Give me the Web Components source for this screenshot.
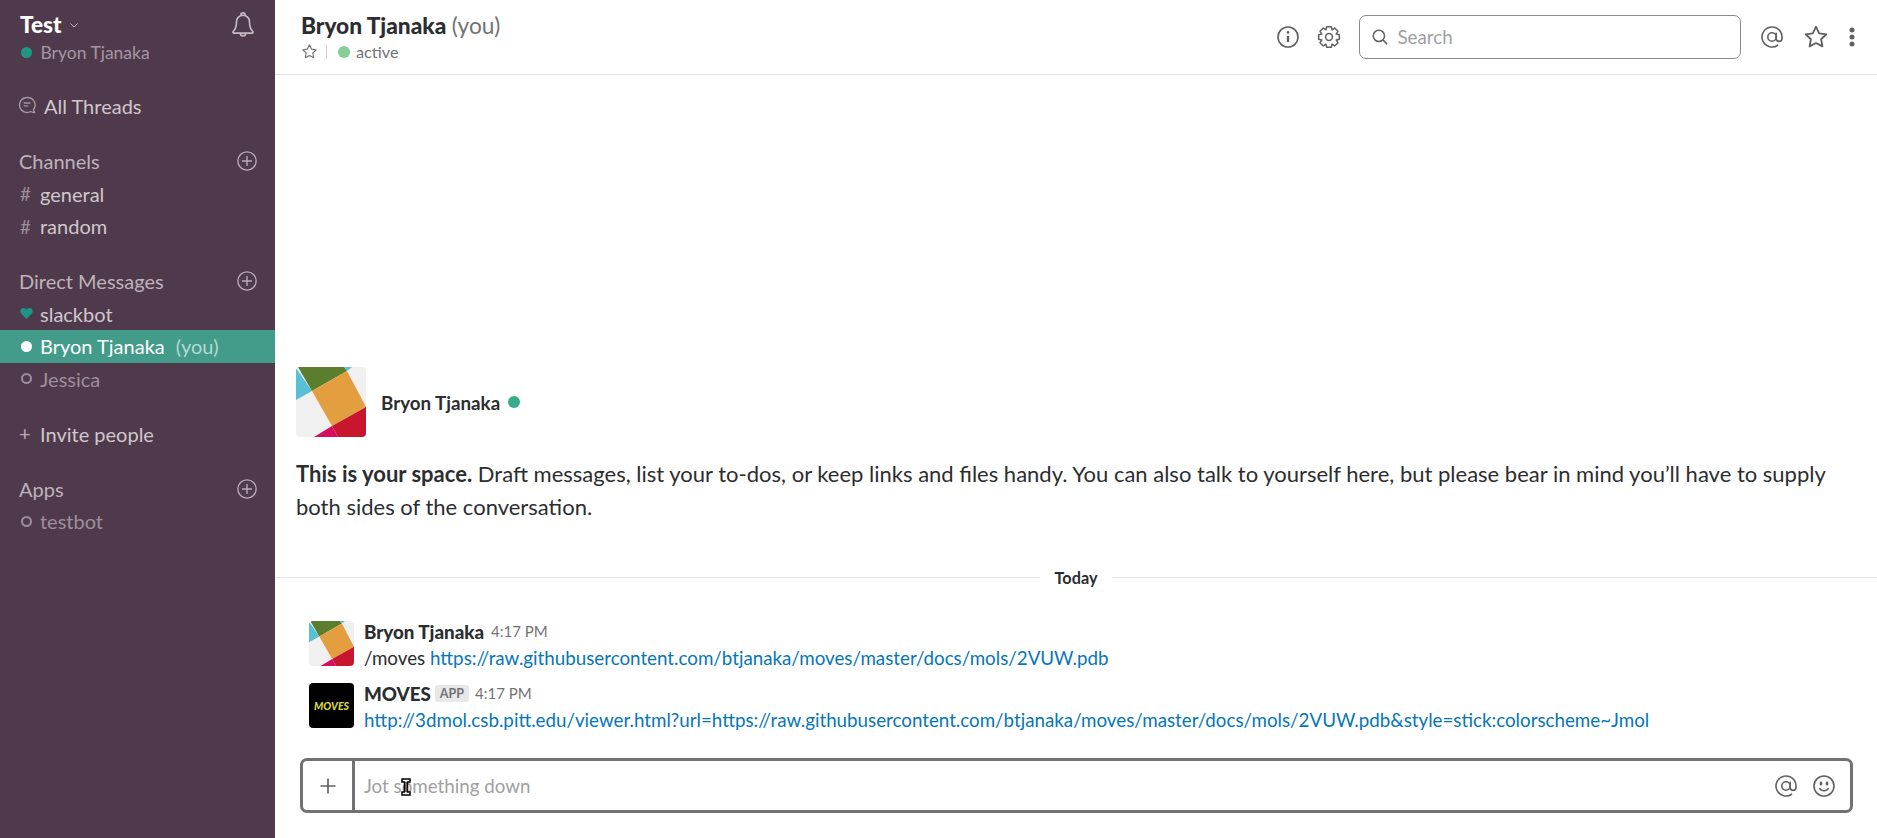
<!DOCTYPE html>
<html>
<head>
<meta charset="utf-8">
<title>Slack</title>
<style>
  html, body { margin: 0; height: 100%; overflow: hidden; }
  body { font-family: Lato, "Open Sans", sans-serif; color: #2c2d30; background: #fff; }
</style>
</head>
<body>
<slack-app>
  <side-bar slot="side"></side-bar>
  <chat-header slot="head"></chat-header>
  <chat-intro slot="main"></chat-intro>
  <day-divider slot="main">Today</day-divider>
  <chat-message slot="main" name="Bryon Tjanaka" time="4:17 PM" avatar="logo">/moves <a href="#">https://raw.githubusercontent.com/btjanaka/moves/master/docs/mols/2VUW.pdb</a></chat-message>
  <chat-message slot="main" name="MOVES" time="4:17 PM" avatar="moves" app><a href="#">http://3dmol.csb.pitt.edu/viewer.html?url=https://raw.githubusercontent.com/btjanaka/moves/master/docs/mols/2VUW.pdb&amp;style=stick:colorscheme~Jmol</a></chat-message>
  <msg-input slot="foot"></msg-input>
</slack-app>

<script>
// eight lobed gear outline, round joins do the rest
function gearPath() {
  const pts = [];
  for (let i = 0; i < 8; i++) {
    const a = i * Math.PI / 4;
    [[-0.40, 7.8], [-0.22, 10.6], [0.22, 10.6], [0.40, 7.8]].forEach(([d, r]) => {
      pts.push((12 + r * Math.cos(a + d)).toFixed(2) + ' ' + (12 + r * Math.sin(a + d)).toFixed(2));
    });
  }
  return 'M' + pts.join('L') + 'z';
}

const ICONS = {
  star: '<path d="M12 2.500l2.900 6.100 6.600.9-4.800 4.600 1.200 6.600-5.900-3.200-5.900 3.200 1.200-6.600L2.500 9.500l6.600-.9z"/>',
  bell: '<path d="M6 9a6 6 0 0 1 12 0c0 6 1.500 7.500 3 9 .6.800.2 1.500-.7 1.500H3.700c-.9 0-1.300-.7-.7-1.500 1.500-1.500 3-3 3-9z"/><path d="M10 2.800a2 2 0 0 1 4 0"/><path d="M9.500 19.500a2.500 2.500 0 0 0 5 0"/>',
  thread: '<path d="M12 3a9 9 0 1 0 4.500 16.800c1.300 1 3 1.300 4.700 1.200-.8-.8-1.400-2-1.500-3.400A9 9 0 0 0 12 3z"/><path d="M8 9.500h8M8 13h5.500"/>',
  plusc: '<circle cx="12" cy="12" r="10"/><path d="M12 6.500v11M6.500 12h11"/>',
  plus: '<path d="M12 3v18M3 12h18"/>',
  info: '<circle cx="12" cy="12" r="10"/><path d="M12 11v6" stroke-width="2.400"/><path d="M12 7.200v.3" stroke-width="2.600" stroke-linecap="round"/>',
  gear: '<path d="' + gearPath() + '"/><circle cx="12" cy="12" r="3.400"/>',
  search: '<circle cx="10.500" cy="10.500" r="7.500"/><path d="M16 16l5.500 5.500"/>',
  at: '<circle cx="12" cy="12" r="4.200"/><path d="M16.200 7.800v5.700a2.900 2.900 0 0 0 5.800 0V12a10 10 0 1 0-4 8"/>',
  smile: '<circle cx="12" cy="12" r="10"/><path d="M7.500 14a5 5 0 0 0 9 0"/><path d="M9 8.800v1.400M15 8.800v1.400" stroke-width="2.600" stroke-linecap="round"/>',
  caret: '<path d="M5 9l7 7 7-7"/>'
};

class UiIcon extends HTMLElement {
  connectedCallback() {
    const size = this.getAttribute('size') || 24;
    const weight = this.getAttribute('weight') || 2;
    this.attachShadow({ mode: 'open' }).innerHTML = `
      <style>
        :host { display: inline-flex; width: ${size}px; height: ${size}px; color: inherit; flex: none; }
        svg { width: 100%; height: 100%; fill: none; stroke: currentColor; stroke-width: ${weight}; stroke-linejoin: round; }
      </style>
      <svg viewBox="0 0 24 24">${ICONS[this.getAttribute('name')]}</svg>`;
  }
}
customElements.define('ui-icon', UiIcon);

class LogoMark extends HTMLElement {
  connectedCallback() {
    const size = this.getAttribute('size') || 70;
    this.attachShadow({ mode: 'open' }).innerHTML = `
      <style>
        :host { display: block; width: ${size}px; height: ${size}px; flex: none; border-radius: 4px; overflow: hidden; background: #f0f0f0; }
        svg { display: block; width: 100%; height: 100%; }
      </style>
      <svg viewBox="0 0 70 70">
        <polygon fill="#56c0d4" points="0,1 16,24 0,33"/>
        <polygon fill="#5a7d2e" points="2,0 48,0 51,4 16,24"/>
        <polygon fill="#56c0d4" points="48,0 56,0 51,4"/>
        <polygon fill="#e39f3f" points="16,24 51,4 70,40 36,59"/>
        <polygon fill="#c9162f" points="70,40 70,70 42,70 36,59"/>
        <polygon fill="#d90d5f" points="36,59 42,70 18,70"/>
      </svg>`;
  }
}
customElements.define('logo-mark', LogoMark);

class SideRow extends HTMLElement {
  connectedCallback() {
    const kind = this.getAttribute('kind') || 'hash';
    const marks = {
      hash: '<span class="hash">#</span>',
      self: '<i class="dot"></i>',
      away: '<i class="ring"></i>',
      heart: '<svg class="heart" viewBox="0 0 14 12"><path d="M7 12L1 5.800C-.8 3.500.6 0 3.700 0 5.200 0 6.300.8 7 2 7.700.8 8.800 0 10.300 0c3.100 0 4.500 3.500 2.700 5.800z"/></svg>',
      add: '<span class="add">+</span>'
    };
    this.attachShadow({ mode: 'open' }).innerHTML = `
      <style>
        :host { display: flex; align-items: center; height: 32.5px; padding-left: 19px; font-size: 20px; color: #cfc7cd; white-space: pre; }
        :host([dim]) { color: #9d8f9a; }
        :host([active]) { background: #439b8a; color: #fff; }
        .mark { width: 21px; flex: none; display: flex; align-items: center; }
        .hash { color: #9d8f9a; font-size: 18.75px; margin-left: 1px; }
        .add { color: #b8acb5; font-size: 20px; margin-top: -3px; }
        .dot { width: 11px; height: 11px; border-radius: 50%; background: #fff; margin-left: 2px; }
        .ring { width: 7px; height: 7px; border-radius: 50%; border: 2px solid #9d8f9a; margin-left: 2px; }
        .heart { width: 13px; height: 11px; fill: #1f9587; margin-left: 1px; }
        ::slotted(small) { font-size: 20px; color: #b3dad2; margin-left: 6px; }
      </style>
      <span class="mark">${marks[kind]}</span><slot></slot>`;
  }
}
customElements.define('side-row', SideRow);

class SideHeading extends HTMLElement {
  connectedCallback() {
    this.attachShadow({ mode: 'open' }).innerHTML = `
      <style>
        :host { display: flex; align-items: center; justify-content: space-between; height: 32.5px; margin-top: 22.500px; padding: 0 17px 0 19px; font-size: 20px; color: #bdb3bb; }
        ui-icon { color: #b8acb5; }
      </style>
      <slot></slot><ui-icon name="plusc" size="22" weight="1.500"></ui-icon>`;
  }
}
customElements.define('side-heading', SideHeading);

class SideBar extends HTMLElement {
  connectedCallback() {
    this.attachShadow({ mode: 'open' }).innerHTML = `
      <style>
        :host { display: block; height: 100%; background: #4f3a4b; box-sizing: border-box; padding-top: 10px; overflow: hidden; }
        .team { display: flex; justify-content: space-between; padding: 0 19px 0 20px; height: 29px; align-items: center; }
        .team b { font-size: 22.500px; font-weight: 900; color: #fff; }
        .team span { display: flex; align-items: center; gap: 7px; }
        .team ui-icon.caret { color: #c5bcc3; }
        .team ui-icon.bell { color: #c5bcc3; }
        .who { display: flex; align-items: center; height: 26px; padding-left: 21px; font-size: 17.500px; color: #a596a2; gap: 8.500px; }
        .who i { width: 11px; height: 11px; border-radius: 50%; background: #1f9587; }
        .threads { display: flex; align-items: center; height: 32.5px; margin-top: 25px; padding-left: 17px; font-size: 20px; color: #cfc7cd; gap: 7px; }
        .threads ui-icon { color: #a596a2; margin-top: -3px; }
        .invite { margin-top: 23px; }
      </style>
      <div class="team">
        <span><b>Test</b><ui-icon class="caret" name="caret" size="12" weight="2"></ui-icon></span>
        <ui-icon class="bell" name="bell" size="26" weight="1.500"></ui-icon>
      </div>
      <div class="who"><i></i>Bryon Tjanaka</div>
      <div class="threads"><ui-icon name="thread" size="20" weight="1.700"></ui-icon>All Threads</div>
      <side-heading>Channels</side-heading>
      <side-row>general</side-row>
      <side-row>random</side-row>
      <side-heading>Direct Messages</side-heading>
      <side-row kind="heart">slackbot</side-row>
      <side-row kind="self" active>Bryon Tjanaka <small>(you)</small></side-row>
      <side-row kind="away" dim>Jessica</side-row>
      <side-row kind="add" class="invite">Invite people</side-row>
      <side-heading>Apps</side-heading>
      <side-row kind="away" dim style="margin-top:-0.5px">testbot</side-row>`;
  }
}
customElements.define('side-bar', SideBar);

class ChatHeader extends HTMLElement {
  connectedCallback() {
    this.attachShadow({ mode: 'open' }).innerHTML = `
      <style>
        :host { display: flex; align-items: center; justify-content: space-between; box-sizing: border-box; height: 75px; padding: 0 22.500px 1px 26px; border-bottom: 1px solid #e5e5e5; background: #fff; }
        .left { padding-top: 2px; }
        .title { font-size: 22.700px; line-height: 28px; font-weight: 900; color: #2c2d30; white-space: pre; }
        .title span { font-weight: 400; color: #717274; }
        .meta { display: flex; align-items: center; height: 24px; font-size: 16.250px; color: #717274; }
        .meta ui-icon { color: #717274; }
        .sep { width: 1px; height: 14px; background: #e0c8c0; margin: 0 11px 0 8px; }
        .meta i { width: 12px; height: 12px; border-radius: 50%; background: #85cf96; margin-right: 6px; }
        .tools { display: flex; align-items: center; color: #616163; }
        .box { display: flex; align-items: center; box-sizing: border-box; width: 382px; height: 44px; margin: 0 19px 0 18px; padding-left: 11px; border: 1px solid #8b8b8b; border-radius: 7px; font-size: 18.750px; color: #a0a0a2; gap: 9px; }
        .box ui-icon { color: #616163; }
      </style>
      <div class="left">
        <div class="title">Bryon Tjanaka <span>(you)</span></div>
        <div class="meta"><ui-icon name="star" size="17" weight="1.600"></ui-icon><span class="sep"></span><i></i>active</div>
      </div>
      <div class="tools">
        <ui-icon name="info" size="24" weight="1.600"></ui-icon>
        <ui-icon name="gear" size="24" weight="1.500" style="margin-left:17px"></ui-icon>
        <div class="box"><ui-icon name="search" size="18" weight="2"></ui-icon>Search</div>
        <ui-icon name="at" size="24" weight="1.600"></ui-icon>
        <ui-icon name="star" size="26" weight="1.700" style="margin-left:19px"></ui-icon>
        <svg width="6" height="20" viewBox="0 0 6 20" style="margin-left:20px" fill="#616163"><circle cx="3" cy="3" r="2.500"/><circle cx="3" cy="10" r="2.500"/><circle cx="3" cy="17" r="2.500"/></svg>
      </div>`;
  }
}
customElements.define('chat-header', ChatHeader);

class ChatIntro extends HTMLElement {
  connectedCallback() {
    this.attachShadow({ mode: 'open' }).innerHTML = `
      <style>
        :host { display: block; padding: 0 30px 0 21px; }
        .who { display: flex; align-items: center; font-size: 18.750px; font-weight: 700; color: #2c2d30; }
        .who span { margin-left: 15px; }
        .who i { width: 12px; height: 12px; border-radius: 50%; background: #38ac88; margin-left: 8px; }
        p { margin: 20px 0 0; font-size: 22px; line-height: 33px; color: #2c2d30; }
      </style>
      <div class="who"><logo-mark size="70"></logo-mark><span>Bryon Tjanaka</span><i></i></div>
      <p><b>This is your space.</b> Draft messages, list your to-dos, or keep links and files handy. You can also talk to yourself here, but please bear in mind you’ll have to supply both sides of the conversation.</p>`;
  }
}
customElements.define('chat-intro', ChatIntro);

class DayDivider extends HTMLElement {
  connectedCallback() {
    this.attachShadow({ mode: 'open' }).innerHTML = `
      <style>
        :host { display: flex; align-items: center; height: 20px; margin: 44px 0 34px; font-size: 16.250px; font-weight: 700; color: #2c2d30; }
        :host::before, :host::after { content: ""; flex: 1; height: 1px; background: #e5e5e5; }
        span { padding: 0 15px; }
      </style>
      <span><slot></slot></span>`;
  }
}
customElements.define('day-divider', DayDivider);

class ChatMessage extends HTMLElement {
  connectedCallback() {
    const art = this.getAttribute('avatar') === 'moves'
      ? '<div class="moves">MOVES</div>'
      : '<logo-mark size="45"></logo-mark>';
    this.attachShadow({ mode: 'open' }).innerHTML = `
      <style>
        :host { display: flex; gap: 10px; padding: 0 33px 0 34px; margin-bottom: 13px; }
        .moves { width: 45px; height: 45px; flex: none; border-radius: 4px; background: #000; color: #d8d840; font-size: 10.500px; font-weight: 900; font-style: italic; display: flex; align-items: center; justify-content: center; }
        .body { min-width: 0; }
        .top { display: flex; align-items: center; height: 20px; white-space: nowrap; }
        b { font-size: 18.750px; font-weight: 900; color: #2c2d30; }
        .app { font-size: 12.500px; font-weight: 700; color: #717274; background: #e8e8e8; border-radius: 2.500px; padding: 1px 5px; margin-left: 4px; }
        time { font-size: 15px; color: #717274; margin-left: 7px; }
        :host([app]) time { margin-left: 6px; }
        .text { margin-top: 4px; font-size: 18.750px; line-height: 25px; color: #2c2d30; white-space: nowrap; }
        ::slotted(a) { color: #0576b9; text-decoration: none; }
      </style>
      ${art}
      <div class="body">
        <div class="top"><b>${this.getAttribute('name')}</b>${this.hasAttribute('app') ? '<span class="app">APP</span>' : ''}<time>${this.getAttribute('time')}</time></div>
        <div class="text"><slot></slot></div>
      </div>`;
  }
}
customElements.define('chat-message', ChatMessage);

class MsgInput extends HTMLElement {
  connectedCallback() {
    this.attachShadow({ mode: 'open' }).innerHTML = `
      <style>
        :host { display: flex; position: relative; box-sizing: border-box; height: 55px; margin: 0 24px 25px 25px; border: 3px solid #717274; border-radius: 7px; background: #fff; }
        .add { width: 49px; flex: none; display: flex; align-items: center; justify-content: center; border-right: 3px solid #717274; color: #616163; }
        .field { flex: 1; display: flex; align-items: center; padding: 0 14px 0 9px; font-size: 18.750px; color: #a0a0a2; }
        .field span { flex: 1; }
        .field ui-icon { color: #616163; margin-left: 14px; }
        .cursor { position: absolute; left: 98px; top: 17px; width: 10px; height: 18px; }
      </style>
      <div class="add"><ui-icon name="plus" size="20" weight="2"></ui-icon></div>
      <div class="field"><span>Jot something down</span><ui-icon name="at" size="24" weight="1.600"></ui-icon><ui-icon name="smile" size="24" weight="1.600"></ui-icon></div>
      <svg class="cursor" viewBox="0 0 10 18"><path d="M1 1h8v3H6.500v10H9v3H1v-3h2.500V4H1z" fill="#fff" stroke="#000" stroke-width="1.500"/><path d="M5 4v10" stroke="#000" stroke-width="1"/></svg>`;
  }
}
customElements.define('msg-input', MsgInput);

class SlackApp extends HTMLElement {
  connectedCallback() {
    this.attachShadow({ mode: 'open' }).innerHTML = `
      <style>
        :host { display: grid; grid-template-columns: 275px 1fr; height: 100vh; overflow: hidden; }
        .side { min-height: 0; }
        .main { display: flex; flex-direction: column; min-width: 0; min-height: 0; }
        .feed { flex: 1; display: flex; flex-direction: column; justify-content: flex-end; min-height: 0; padding-bottom: 13px; }
      </style>
      <div class="side"><slot name="side"></slot></div>
      <div class="main">
        <slot name="head"></slot>
        <div class="feed"><slot name="main"></slot></div>
        <slot name="foot"></slot>
      </div>`;
  }
}
customElements.define('slack-app', SlackApp);
</script>
</body>
</html>
